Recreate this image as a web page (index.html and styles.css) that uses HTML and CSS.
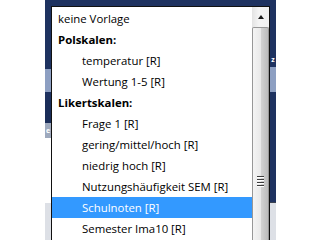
FILE: index.html
```html
<!DOCTYPE html>
<html lang="de">
  <head>
    <meta charset="UTF-8" />
    <title>Vorlage</title>
    <link rel="stylesheet" href="styles.css">
  </head>
  <body>
    <div class="screen">
      <div class="backdrop">
        <div class="edge edge-left">
          <div class="seg navy l1"></div>
          <div class="seg light l2"></div>
          <div class="seg navy l3"></div>
          <div class="seg dark l4"></div>
          <div class="seg grey l5">e</div>
          <div class="seg blank l6"></div>
          <div class="seg pale fill"></div>
        </div>
        <div class="backdrop-middle"></div>
        <div class="edge edge-right">
          <div class="seg navy r1"></div>
          <div class="seg navy r2">z</div>
          <div class="seg navy r3"></div>
          <div class="seg light r4"></div>
          <div class="seg navy r5"></div>
          <div class="seg pale fill"></div>
        </div>
      </div>

      <div class="dropdown">
        <ul class="options">
          <li class="option">keine Vorlage</li>
          <li class="option group">Polskalen:</li>
          <li class="option sub">temperatur [R]</li>
          <li class="option sub">Wertung 1-5 [R]</li>
          <li class="option group">Likertskalen:</li>
          <li class="option sub">Frage 1 [R]</li>
          <li class="option sub">gering/mittel/hoch [R]</li>
          <li class="option sub">niedrig hoch [R]</li>
          <li class="option sub">Nutzungshäufigkeit SEM [R]</li>
          <li class="option sub selected">Schulnoten [R]</li>
          <li class="option sub">Semester Ima10 [R]</li>
        </ul>
        <div class="scrollbar">
          <div class="scroll-up"><span class="arrow"></span></div>
          <div class="scroll-thumb">
            <div class="grip"><i></i><i></i><i></i><i></i></div>
          </div>
        </div>
      </div>
    </div>
  </body>
</html>
```

FILE: styles.css
```css
html, body {
  margin: 0;
  background: #fff;
}
.screen {
  position: relative;
  width: 320px;
  height: 240px;
  overflow: hidden;
  font-family: "Open Sans", "Noto Sans", sans-serif;
  font-size: 11.4px;
  color: #000;
}

/* window behind the popup */
.backdrop {
  position: absolute;
  left: 45px;
  top: 0;
  width: 231px;
  height: 240px;
  display: flex;
}
.backdrop-middle {
  flex: 1;
  background: #1e3260;
}
.edge {
  width: 6px;
  display: flex;
  flex-direction: column;
}
.seg {
  font-size: 7px;
  line-height: 8px;
  color: #fff;
  text-align: center;
}
.seg.navy { background: #1e3260; }
.seg.dark { background: #1a2d58; }
.seg.light { background: #8d9fc2; }
.seg.grey { background: #9ea9bd; }
.seg.blank { background: #fff; }
.seg.pale {
  background: #dde0e6;
  border-top: 1px solid #3a4150;
}
.seg.fill { flex: 1; }
.edge-left .seg.pale { border-top: none; }

.l1 { height: 69px; }
.l2 { height: 23px; }
.l3 { height: 8px; background: #2a4170; }
.l4 { height: 23px; }
.l5 { height: 15px; padding-top: 4px; box-sizing: border-box; font-weight: bold; }
.l6 { height: 65px; }

.r1 { height: 56px; }
.r2 { height: 8px; font-weight: bold; }
.r3 { height: 3px; }
.r4 { height: 25px; }
.r5 { height: 110px; }

/* dropdown list */
.dropdown {
  position: absolute;
  left: 51px;
  top: 6px;
  width: 219px;
  height: 240px;
  box-sizing: border-box;
  border: 1px solid #111;
  border-bottom: none;
  background: #fff;
  display: flex;
}
.options {
  flex: 1;
  list-style: none;
  margin: 0;
  padding: 1px 0 0;
}
.option {
  height: 21px;
  line-height: 21px;
  padding-left: 6px;
  white-space: nowrap;
}
.option.group {
  font-weight: bold;
}
.option.sub {
  padding-left: 30px;
}
.option.selected {
  background: #3399ff;
  color: #fff;
}

.scrollbar {
  width: 17px;
  display: flex;
  flex-direction: column;
  background: linear-gradient(to right, #e3e3e3, #f4f4f4 40%, #f0f0f0);
}
.scroll-up {
  height: 20px;
  display: flex;
  justify-content: center;
  align-items: center;
}
.arrow {
  width: 0;
  height: 0;
  border-left: 3px solid transparent;
  border-right: 3px solid transparent;
  border-bottom: 4px solid #1a1a1a;
}
.scroll-thumb {
  flex: 1;
  border: 1px solid #979797;
  border-bottom: none;
  border-radius: 2px 2px 0 0;
  background: linear-gradient(to right, #f4f4f4, #e9e9e9 50%, #d4d4d4 51%, #bcbcbc);
  display: flex;
  justify-content: center;
  padding-top: 148px;
}
.grip {
  display: flex;
  flex-direction: column;
  gap: 1px;
}
.grip i {
  display: block;
  width: 7px;
  height: 1px;
  background: #3c3c3c;
  border-bottom: 1px solid #fff;
}
```
